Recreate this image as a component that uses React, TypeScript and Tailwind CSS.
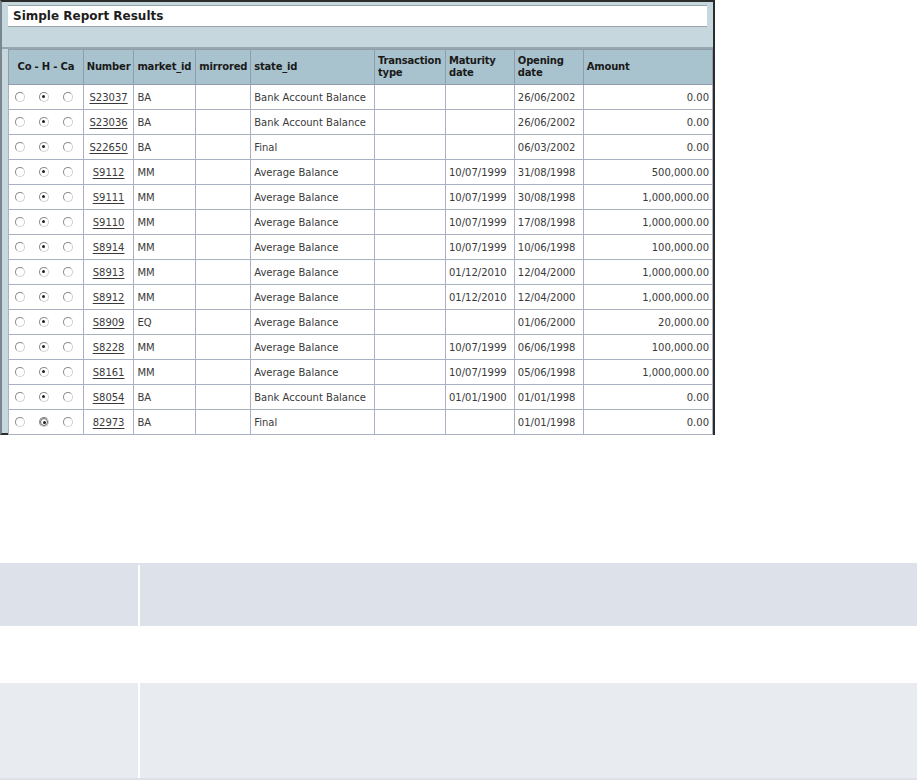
import React from 'react';

type Row = {
  num: string;
  market: string;
  state: string;
  maturity: string;
  opening: string;
  amount: string;
  focus?: boolean;
};

const rows: Row[] = [
  { num: 'S23037', market: 'BA', state: 'Bank Account Balance', maturity: '', opening: '26/06/2002', amount: '0.00' },
  { num: 'S23036', market: 'BA', state: 'Bank Account Balance', maturity: '', opening: '26/06/2002', amount: '0.00' },
  { num: 'S22650', market: 'BA', state: 'Final', maturity: '', opening: '06/03/2002', amount: '0.00' },
  { num: 'S9112', market: 'MM', state: 'Average Balance', maturity: '10/07/1999', opening: '31/08/1998', amount: '500,000.00' },
  { num: 'S9111', market: 'MM', state: 'Average Balance', maturity: '10/07/1999', opening: '30/08/1998', amount: '1,000,000.00' },
  { num: 'S9110', market: 'MM', state: 'Average Balance', maturity: '10/07/1999', opening: '17/08/1998', amount: '1,000,000.00' },
  { num: 'S8914', market: 'MM', state: 'Average Balance', maturity: '10/07/1999', opening: '10/06/1998', amount: '100,000.00' },
  { num: 'S8913', market: 'MM', state: 'Average Balance', maturity: '01/12/2010', opening: '12/04/2000', amount: '1,000,000.00' },
  { num: 'S8912', market: 'MM', state: 'Average Balance', maturity: '01/12/2010', opening: '12/04/2000', amount: '1,000,000.00' },
  { num: 'S8909', market: 'EQ', state: 'Average Balance', maturity: '', opening: '01/06/2000', amount: '20,000.00' },
  { num: 'S8228', market: 'MM', state: 'Average Balance', maturity: '10/07/1999', opening: '06/06/1998', amount: '100,000.00' },
  { num: 'S8161', market: 'MM', state: 'Average Balance', maturity: '10/07/1999', opening: '05/06/1998', amount: '1,000,000.00' },
  { num: 'S8054', market: 'BA', state: 'Bank Account Balance', maturity: '01/01/1900', opening: '01/01/1998', amount: '0.00' },
  { num: '82973', market: 'BA', state: 'Final', maturity: '', opening: '01/01/1998', amount: '0.00', focus: true },
];

function Radio({ checked, focus }: { checked?: boolean; focus?: boolean }) {
  return (
    <span className="relative inline-flex h-[10px] w-[10px] items-center justify-center rounded-full border border-[#8a8a8a] border-r-[#d0d0d0] border-b-[#d0d0d0] bg-white">
      {checked && !focus && <span className="h-[3px] w-[3px] -translate-x-[1px] -translate-y-[1px] rounded-full bg-[#222]" />}
      {focus && (
        <span className="flex h-[8px] w-[8px] items-center justify-center rounded-full border border-[#666]">
          <span className="h-[3px] w-[3px] rounded-full bg-[#222]" />
        </span>
      )}
    </span>
  );
}

const th = 'border border-[#8f9cae] px-[3px] align-middle font-bold leading-[12px] text-[#1a1a1a] tracking-[-0.2px]';
const td = 'border border-[#a9b1c2] px-[3px] h-[25px] text-[#3a3a3a]';

export default function App() {
  return (
    <div className="min-h-[780px] w-[917px] bg-white" style={{ fontFamily: '"DejaVu Sans", Verdana, sans-serif' }}>
      {/* screenshot of the report */}
      <div className="h-[435px] w-[715px] border-t-2 border-r-2 border-b-2 border-[#2c2c2c] border-l-2 border-l-[#7a8790] bg-[#c7d7de] pt-[2px]">
        <div className="mx-[6px] mt-[1px] flex h-[22px] items-center border-y border-[#9aa4ab] bg-white px-[5px]">
          <span className="text-[12px] font-bold text-[#1e1e1e]">Simple Report Results</span>
        </div>
        <div className="h-[22px] border-b-2 border-[#98a6ae]" />
        <table className="ml-[6px] table-fixed border-collapse text-[10px]">
          <colgroup>
            <col className="w-[75px]" />
            <col className="w-[50px]" />
            <col className="w-[62px]" />
            <col className="w-[54px]" />
            <col className="w-[124px]" />
            <col className="w-[71px]" />
            <col className="w-[69px]" />
            <col className="w-[69px]" />
            <col className="w-[131px]" />
          </colgroup>
          <thead>
            <tr className="h-[35px] bg-[#a9c3ce] text-[10px]">
              <th className={th + ' text-center'}>Co - H - Ca</th>
              <th className={th + ' text-left'}>Number</th>
              <th className={th + ' text-left'}>market_id</th>
              <th className={th + ' text-left'}>mirrored</th>
              <th className={th + ' text-left'}>state_id</th>
              <th className={th + ' text-left'}>Transaction type</th>
              <th className={th + ' text-left'}>Maturity date</th>
              <th className={th + ' text-left'}>Opening date</th>
              <th className={th + ' text-left'}>Amount</th>
            </tr>
          </thead>
          <tbody className="bg-white">
            {rows.map((r) => (
              <tr key={r.num}>
                <td className={td}>
                  <div className="flex items-center gap-[14px] pl-[3px]">
                    <Radio />
                    <Radio checked focus={r.focus} />
                    <Radio />
                  </div>
                </td>
                <td className={td + ' text-center'}>
                  <span className="underline underline-offset-2">{r.num}</span>
                </td>
                <td className={td}>{r.market}</td>
                <td className={td}></td>
                <td className={td + ' whitespace-nowrap'}>{r.state}</td>
                <td className={td}></td>
                <td className={td + ' whitespace-nowrap'}>{r.maturity}</td>
                <td className={td + ' whitespace-nowrap'}>{r.opening}</td>
                <td className={td + ' text-right'}>{r.amount}</td>
              </tr>
            ))}
          </tbody>
        </table>
      </div>

      {/* empty info rows below */}
      <div className="mt-[128px] flex h-[63px] bg-[#dde1ea]">
        <div className="w-[138px]" />
        <div className="mt-[2px] w-[2px] bg-white" />
        <div className="flex-1" />
      </div>
      <div className="mt-[57px] flex h-[97px] border-b-2 border-[#dde1ea] bg-[#e8ebf0]">
        <div className="w-[138px]" />
        <div className="w-[2px] bg-white" />
        <div className="flex-1" />
      </div>
    </div>
  );
}
